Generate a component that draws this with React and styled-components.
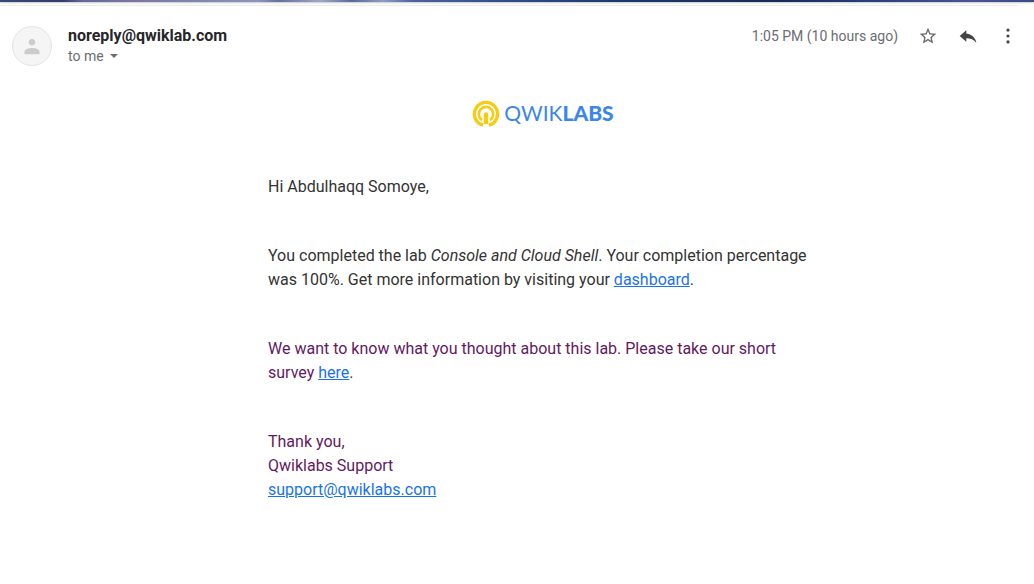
import React from "react";
import styled, { createGlobalStyle } from "styled-components";

const GlobalStyle = createGlobalStyle`
  * { box-sizing: border-box; }
  body {
    margin: 0;
    background: #fff;
    color: #333;
    font-family: Roboto, "Liberation Sans", sans-serif;
  }
`;

const ThemeStrip = styled.div`
  height: 2px;
  background: linear-gradient(90deg,
    #3a4874 0%, #2f3d68 6%, #666898 8%, #7a76a2 13%, #8088b0 20%, #8d95b8 25%,
    #65719c 27%, #a0a8c4 31%, #5a6a98 34%, #8f9cc0 37%, #4a62a0 40%, #2f4c86 50%,
    #1c3a68 60%, #142d54 75%, #26407a 84%, #4a5490 94%, #3c4a84 100%);
  box-shadow: 0 1px 2px #c4c4cc;
`;

const Divider = styled.hr`
  height: 1px;
  margin: 3px 16px 0 0;
  border: 0;
  background: #ececec;
`;

const Header = styled.header`
  display: flex;
  align-items: flex-start;
  padding: 20px 16px 0 12px;
`;

const Avatar = styled.div`
  display: flex;
  align-items: center;
  justify-content: center;
  flex: none;
  width: 40px;
  height: 40px;
  margin-right: 16px;
  border: 1px solid #e4e4e4;
  border-radius: 50%;
  background: #f5f5f5;
  color: #ccc;
`;

const Sender = styled.div`
  flex: 1;
  min-width: 0;
`;

const SenderName = styled.h1`
  margin: 0;
  color: #26272a;
  font-size: 16px;
  font-weight: 700;
  line-height: 20px;
`;

const Recipient = styled.button`
  display: flex;
  align-items: center;
  gap: 6px;
  padding: 0;
  border: 0;
  background: none;
  color: #6a6d72;
  font: inherit;
  font-size: 14px;
  line-height: 20px;
`;

const Meta = styled.div`
  display: flex;
  align-items: center;
  gap: 20px;
  height: 20px;
`;

const Sent = styled.time`
  color: #6a6d72;
  font-size: 14px;
  line-height: 20px;
`;

const IconButton = styled.button`
  display: flex;
  padding: 0;
  border: 0;
  background: none;
  color: ${(p) => p.$color};
`;

const Actions = styled.div`
  display: flex;
  gap: 20px;
`;

const Message = styled.main`
  padding: 34px 16px 16px 68px;
`;

const Letter = styled.article`
  max-width: 550px;
  margin: 0 auto;
  font-size: 16px;
  line-height: 24px;
`;

const Brand = styled.div`
  display: flex;
  align-items: center;
  justify-content: center;
  gap: 4px;
  height: 28px;
  margin-bottom: 47px;
`;

const Wordmark = styled.span`
  color: #3b86e8;
  font-family: Lato, "Liberation Sans", sans-serif;
  font-size: 21px;
  font-weight: 400;
  line-height: 26px;
  padding-bottom: 2px;

  strong { font-weight: 900; }
`;

const Paragraph = styled.p`
  margin: 0 0 45px;
  color: ${(p) => (p.$quoted ? "#621a62" : "#333")};
`;

const Link = styled.a`
  color: #1a73e8;
  text-decoration: underline;
`;

const Icon = ({ size = 20, d }) => (
  <svg width={size} height={size} viewBox="0 0 24 24" fill="currentColor" aria-hidden="true">
    <path d={d} />
  </svg>
);

const icons = {
  person: "M12 11.500c2.210 0 4-1.790 4-4s-1.790-4-4-4-4 1.790-4 4 1.790 4 4 4zm0 3c-4 0-9 1.340-9 4.500v3h18v-3c0-3.160-5-4.500-9-4.500z",
  star: "M22 9.240l-7.190-.62L12 2 9.190 8.630 2 9.240l5.460 4.730L5.820 21 12 17.270 18.180 21l-1.630-7.030L22 9.240zM12 15.400l-3.760 2.270 1-4.280-3.320-2.880 4.380-.38L12 6.100l1.710 4.040 4.380.38-3.320 2.880 1 4.280L12 15.400z",
  reply: "M10 9V5l-8 7 8 7v-4.300c5 0 9 1.800 12 5.300-1-5-4.500-10-12-11z",
  more: "M12 3a1.900 1.900 0 1 0 0 3.800a1.900 1.900 0 0 0 0-3.800zm0 7.100a1.900 1.900 0 1 0 0 3.800a1.900 1.900 0 0 0 0-3.800zm0 7.100a1.900 1.900 0 1 0 0 3.800a1.900 1.900 0 0 0 0-3.800z",
};

const BrandMark = () => (
  <svg width="28" height="28" viewBox="0 0 28 28" fill="none" aria-hidden="true">
    <path d="M11.200 25.200A11.600 11.600 0 1 1 16.800 25.200" stroke="#f5cb13" strokeWidth="3.400" />
    <path d="M10 20.100A7.200 7.200 0 1 1 18 20.100" stroke="#f5cb13" strokeWidth="2.600" />
    <path d="M11.800 14.500a2.200 2.200 0 0 1 4.400 0V24h-4.400z" fill="#f5cb13" />
  </svg>
);

export default function App() {
  return (
    <>
      <GlobalStyle />
      <ThemeStrip />
      <Divider />
      <Header>
        <Avatar><Icon d={icons.person} /></Avatar>
        <Sender>
          <SenderName>noreply@qwiklab.com</SenderName>
          <Recipient type="button">
            to me
            <svg width="8" height="4" viewBox="0 0 8 4" fill="currentColor" aria-hidden="true">
              <path d="M0 0h8L4 4z" />
            </svg>
          </Recipient>
        </Sender>
        <Meta>
          <Sent>1:05 PM (10 hours ago)</Sent>
          <Actions>
            <IconButton type="button" $color="#6a6a6a" aria-label="Star"><Icon d={icons.star} /></IconButton>
            <IconButton type="button" $color="#444" aria-label="Reply"><Icon d={icons.reply} /></IconButton>
            <IconButton type="button" $color="#444" aria-label="More"><Icon d={icons.more} /></IconButton>
          </Actions>
        </Meta>
      </Header>
      <Message>
        <Letter>
          <Brand>
            <BrandMark />
            <Wordmark>QWIK<strong>LABS</strong></Wordmark>
          </Brand>
          <Paragraph>Hi Abdulhaqq Somoye,</Paragraph>
          <Paragraph>
            You completed the lab <em>Console and Cloud Shell</em>. Your completion percentage was
            100%. Get more information by visiting your <Link href="#dashboard">dashboard</Link>.
          </Paragraph>
          <Paragraph $quoted>
            We want to know what you thought about this lab. Please take our short survey{" "}
            <Link href="#survey">here</Link>.
          </Paragraph>
          <Paragraph $quoted>
            Thank you,<br />
            Qwiklabs Support<br />
            <Link href="mailto:support@qwiklabs.com">support@qwiklabs.com</Link>
          </Paragraph>
        </Letter>
      </Message>
    </>
  );
}
